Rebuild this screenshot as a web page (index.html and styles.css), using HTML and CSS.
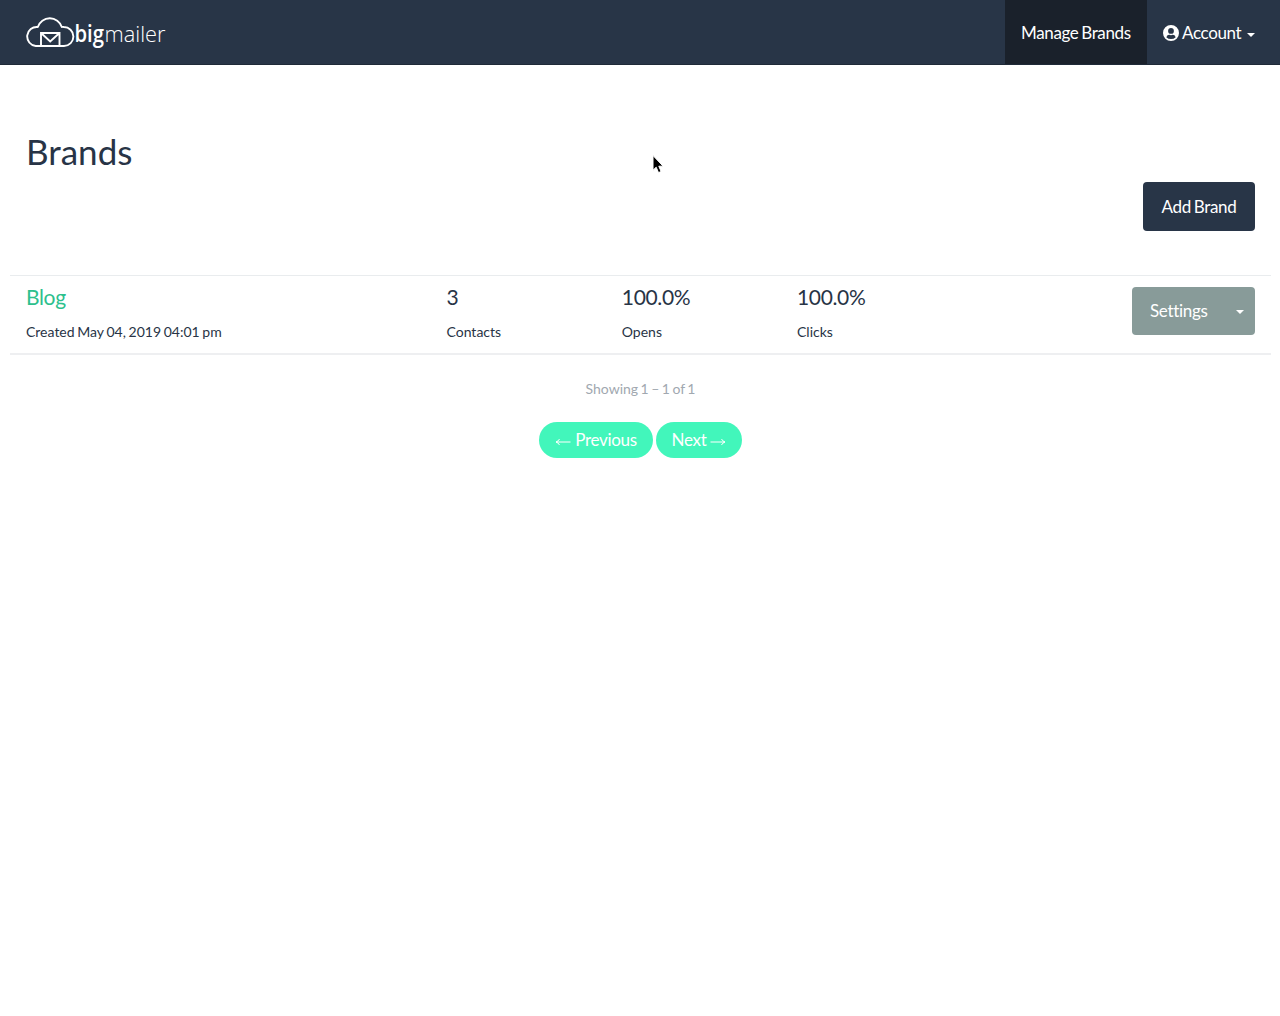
FILE: index.html
```html
<!DOCTYPE html>
<html lang="en">
<head>
<meta charset="utf-8">
<title>Brands - BigMailer</title>
<link rel="stylesheet" href="styles.css">
</head>
<body>
<header class="navbar">
  <a class="logo" aria-label="bigmailer">
    <svg width="142" height="36" viewBox="0 0 142 36">
      <g fill="none" stroke="#fff" stroke-width="1.9" stroke-linejoin="round">
        <path d="M9.7 31H38A9.5 9.5 0 0 0 37.8 12Q36.8 11.8 35.8 12A12.6 12.6 0 0 0 11.8 12A9.5 9.5 0 0 0 9.7 31Z"/>
        <path d="M15 31V18H33.5V31M15.3 18.3L24.2 26.5L33.2 18.3" stroke-linejoin="miter"/>
      </g>
      <text class="logo-big" x="48.5" y="27" textLength="29.5" lengthAdjust="spacingAndGlyphs">big</text>
      <text class="logo-mailer" x="78.5" y="27" textLength="61" lengthAdjust="spacingAndGlyphs">mailer</text>
    </svg>
  </a>
  <nav class="nav">
    <a class="nav-item active">Manage Brands</a>
    <a class="nav-item account">
      <svg class="user" width="16" height="16" viewBox="0 0 16 16"><path fill="#fff" fill-rule="evenodd" d="M8 0a8 8 0 1 0 0 16A8 8 0 0 0 8 0ZM8 3a2.9 2.9 0 1 1 0 5.8A2.9 2.9 0 0 1 8 3ZM3.3 12.2Q4.2 9.8 6.2 9.8Q8 10.5 9.8 9.8Q11.8 9.8 12.7 12.2Q10.8 14.1 8 14.1Q5.2 14.1 3.3 12.2Z"/></svg>
      <span>Account</span><i class="caret"></i>
    </a>
  </nav>
</header>
<main class="page">
  <h1 class="title">Brands</h1>
  <div class="actions"><button class="btn add">Add Brand</button></div>
  <section class="brand">
    <div class="cell"><a class="value link">Blog</a><span class="label created">Created May 04, 2019 04:01 pm</span></div>
    <div class="cell"><span class="value">3</span><span class="label">Contacts</span></div>
    <div class="cell"><span class="value">100.0%</span><span class="label">Opens</span></div>
    <div class="cell"><span class="value">100.0%</span><span class="label">Clicks</span></div>
    <div class="btn settings"><span>Settings</span><i class="caret"></i></div>
  </section>
  <p class="showing">Showing 1 – 1 of 1</p>
  <div class="pager">
    <a class="pill prev"><svg class="arrow" width="16" height="10" viewBox="0 0 16 10"><path d="M15.5 5H1M4.5 2Q3.5 4.2 1 5Q3.5 5.8 4.5 8"/></svg><span>Previous</span></a>
    <a class="pill next"><span>Next</span><svg class="arrow" width="16" height="10" viewBox="0 0 16 10"><path d="M.5 5H15M11.5 2Q12.5 4.2 15 5Q12.5 5.8 11.5 8"/></svg></a>
  </div>
</main>
<svg class="cursor" width="14" height="21" viewBox="0 0 14 21"><path d="M2 1.5V16.2L5.2 13.2L7.5 18.6L10.1 17.5L7.8 12.2H12.1Z" fill="#000" stroke="#fff" stroke-width="1"/></svg>
</body>
</html>
```

FILE: styles.css
```css
* { box-sizing: border-box; }
body {
  margin: 0;
  background: #fff;
  color: #283446;
  font: 17px/24px Lato, sans-serif;
}
.navbar {
  display: flex;
  justify-content: space-between;
  height: 65px;
  padding-left: 26px;
  background: #283547;
  border-bottom: 1px solid #1f2a38;
  color: #fff;
}
.logo { display: block; padding-top: 15px; }
.logo svg { display: block; }
.logo text { fill: #fff; font-family: "Open Sans", sans-serif; font-size: 22.5px; }
.logo .logo-big { font-weight: 600; }
.logo .logo-mailer { font-weight: 300; }
.nav { display: flex; }
.nav-item {
  display: flex;
  align-items: center;
  padding: 2px 16px 0;
  white-space: nowrap;
  letter-spacing: -.36px;
  word-spacing: -1.2px;
}
.active { width: 142px; background: #1a212b; }
.account { width: 133px; }
.user { margin-right: 3px; }
.caret {
  border: 4px solid transparent;
  border-top-color: #fff;
  border-bottom: 0;
}
.account .caret { margin: 3px 0 0 6px; }
.page { padding: 65px 9px 0 10px; }
.title { position: static; margin: -2px 0 0; padding: 0 0 2px 16px; font-size: 35px; line-height: 46px; font-weight: 400; }
.actions { display: flex; justify-content: flex-end; padding: 6px 16px 44px; }
.btn {
  height: 49px;
  border: 0;
  border-radius: 4px;
  color: #fff;
  font: 17px/24px Lato, sans-serif;
  letter-spacing: -.32px;
  word-spacing: -1.2px;
}
.add { width: 112px; padding: 0; background: #283547; }
.brand {
  display: grid;
  grid-template-columns: 420.5px 175.3px 175.2px 1fr auto;
  height: 80px;
  padding: 11px 16px 0;
  border-top: 1px solid #e9ecee;
  border-bottom: 2px solid #eeeff1;
}
.cell { display: flex; flex-direction: column; }
.value { font-size: 21px; line-height: 20px; letter-spacing: -.35px; }
.link { color: #2dc08d; }
.label { margin-top: 15px; font-size: 14px; line-height: 20px; word-spacing: -.9px; }
.settings {
  display: flex;
  align-items: center;
  justify-content: space-between;
  width: 123px;
  height: 48px;
  padding: 0 11px 0 18px;
  background: #889b99;
}
.settings .caret { margin-top: 2px; }
.showing { margin: 24px 0 0; color: #a1a8b0; font-size: 14px; line-height: 20px; text-align: center; word-spacing: -1.1px; }
.pager { display: flex; justify-content: center; gap: 3px; margin-top: 23px; }
.pill {
  display: flex;
  align-items: center;
  justify-content: center;
  gap: 4px;
  height: 36px;
  border-radius: 18px;
  background: #42f6bb;
  color: #fff;
  letter-spacing: -.3px;
}
.prev { width: 114px; }
.next { width: 86px; }
.arrow { margin-top: 3px; fill: none; stroke: #fff; stroke-width: 1; }
.cursor { position: absolute; left: 651px; top: 154px; }
```
